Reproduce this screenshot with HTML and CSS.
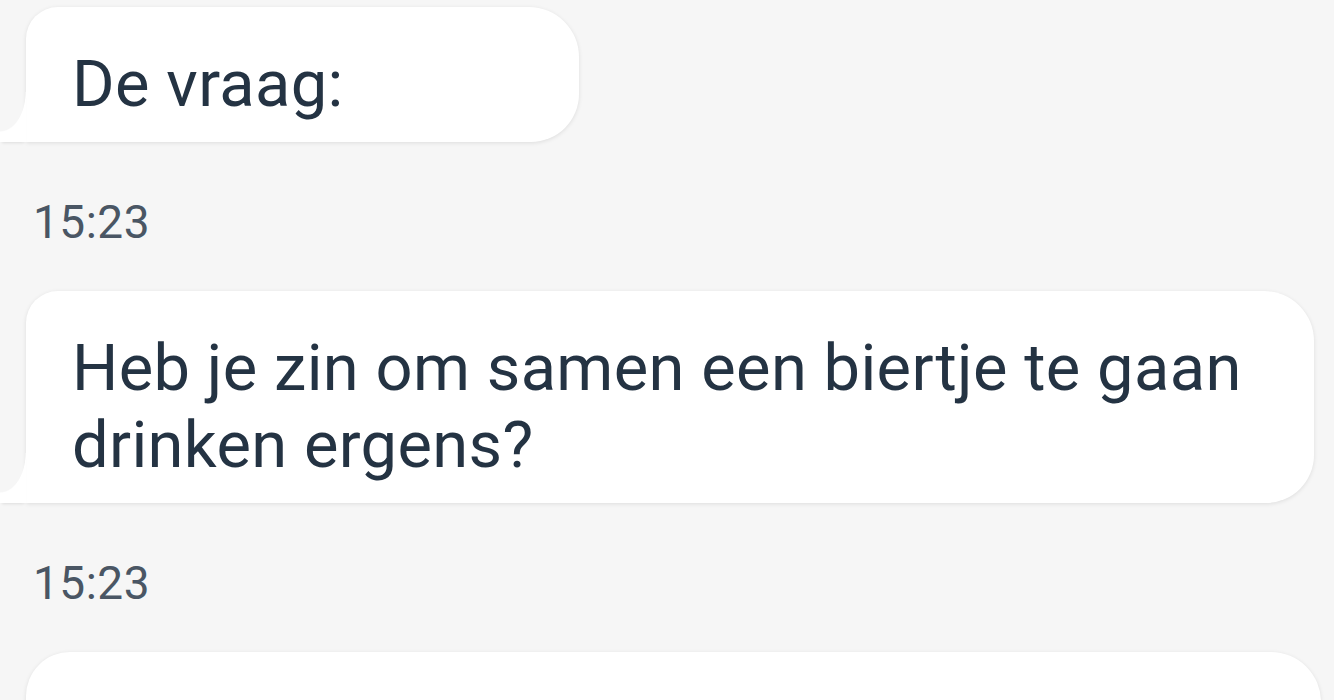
FILE: index.html
```html
<html>
    <head>
        <title>Chat</title>
        <meta name="viewport" content="width=device-width, initial-scale=1" />
        <link rel="stylesheet" href="styles.css">
    </head>
    <body>
        <div class="chat">

            <div class="bubble bubble--short">
                <p class="bubble__text">De vraag:</p>
            </div>

            <div class="time">15:23</div>

            <div class="bubble bubble--wide">
                <p class="bubble__text">Heb je zin om samen een biertje te gaan drinken ergens?</p>
            </div>

            <div class="time">15:23</div>

            <div class="bubble bubble--next"></div>

        </div>
    </body>
</html>
```

FILE: styles.css
```css
* {
    padding: 0px;
    margin: 0px;
    box-sizing: border-box;
}

html, body{
    width: 100%;
    height: 100vh;
    overflow: hidden;
    background-color: #f6f6f6;
    font-family: Roboto, "Noto Sans", sans-serif;
}

.chat{
    display: flex;
    flex-direction: column;
    align-items: flex-start;
    padding-top: 7px;
}

.bubble{
    position: relative;
    margin-left: 26px;
    background-color: white;
    border-radius: 32px 50px 48px 0;
    padding: 39px 30px 19px 46px;
    box-shadow: 0 1px 4px rgba(0, 0, 0, 0.1);
}

/* the tail that runs off the left edge */
.bubble::before{
    content: '';
    position: absolute;
    left: -26px;
    bottom: 0px;
    width: 26px;
    height: 50px;
    background: radial-gradient(ellipse 26px 40px at 0 0, transparent 97%, white 100%);
    box-shadow: 0 3px 3px -2px rgba(0, 0, 0, 0.1);
}

.bubble--short{
    width: 553px;
}

.bubble--wide{
    width: 1288px;
}

.bubble--next{
    width: 1295px;
    height: 200px;
    border-radius: 44px 50px 48px 0;
}

.bubble__text{
    font-size: 65px;
    line-height: 77px;
    letter-spacing: 0.35px;
    color: #243343;
}

.time{
    margin: 54px 0 43px 33px;
    font-size: 46px;
    line-height: 52px;
    letter-spacing: 0.5px;
    color: #4a5664;
}
```
